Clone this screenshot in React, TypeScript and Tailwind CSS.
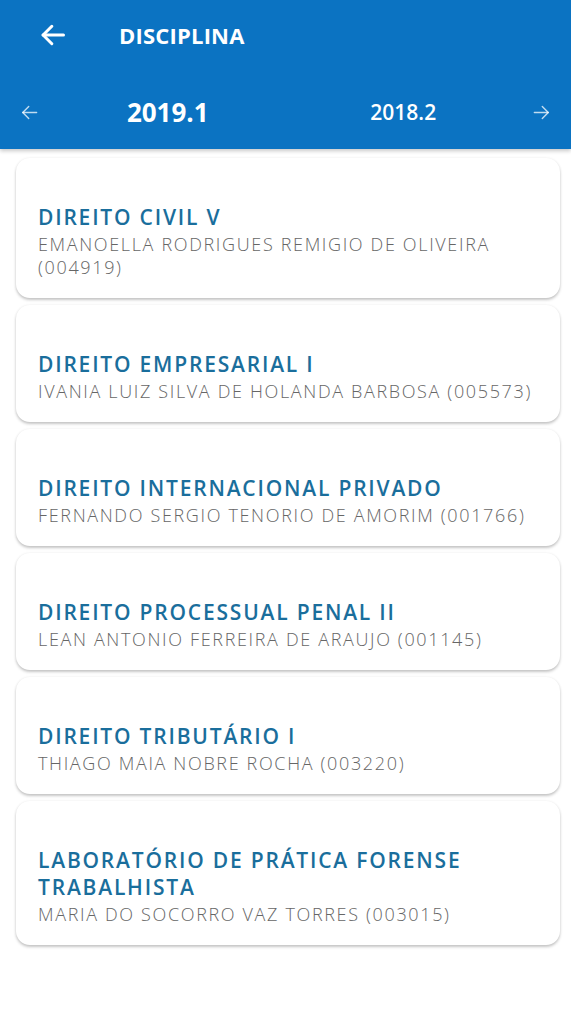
import React from 'react'

type Disciplina = { nome: string; professor: string }

const DISCIPLINAS: Disciplina[] = [
  { nome: 'DIREITO CIVIL V', professor: 'EMANOELLA RODRIGUES REMIGIO DE OLIVEIRA (004919)' },
  { nome: 'DIREITO EMPRESARIAL I', professor: 'IVANIA LUIZ SILVA DE HOLANDA BARBOSA (005573)' },
  { nome: 'DIREITO INTERNACIONAL PRIVADO', professor: 'FERNANDO SERGIO TENORIO DE AMORIM (001766)' },
  { nome: 'DIREITO PROCESSUAL PENAL II', professor: 'LEAN ANTONIO FERREIRA DE ARAUJO (001145)' },
  { nome: 'DIREITO TRIBUTÁRIO I', professor: 'THIAGO MAIA NOBRE ROCHA (003220)' },
  { nome: 'LABORATÓRIO DE PRÁTICA FORENSE TRABALHISTA', professor: 'MARIA DO SOCORRO VAZ TORRES (003015)' },
]

function Arrow({ dir, size, stroke, className }: { dir: 'left' | 'right'; size: number; stroke: number; className?: string }) {
  return (
    <svg width={size} height={size} viewBox="0 0 24 24" fill="none" stroke="currentColor" strokeWidth={stroke} strokeLinecap="round" strokeLinejoin="round" className={className}>
      {dir === 'left' ? (
        <>
          <path d="M21 12H3.5" />
          <path d="M11 4.5 3.5 12l7.5 7.5" />
        </>
      ) : (
        <>
          <path d="M3 12h17.5" />
          <path d="M13 4.5 20.5 12 13 19.5" />
        </>
      )}
    </svg>
  )
}

export default function App() {
  return (
    <div className="min-h-[1024px] bg-white" style={{ fontFamily: '"Open Sans", "Noto Sans", sans-serif' }}>
      {/* barra superior */}
      <header className="bg-[#0b73c2] text-white shadow-[0_2px_4px_rgba(0,0,0,0.22)] h-[149px] flex flex-col">
        <div className="h-[75px] flex items-center pl-[40px] pb-[6px]">
          <Arrow dir="left" size={28} stroke={2.6} className="-ml-[1px]" />
          <h1 className="ml-[52px] text-[22px] font-bold tracking-[0.2px] leading-none">DISCIPLINA</h1>
        </div>
        <div className="h-[74px] flex items-center px-[20px]">
          <div className="w-[30px] flex">
            <Arrow dir="left" size={19} stroke={1.8} className="text-white/75" />
          </div>
          <div className="flex-1 text-center text-[26px] font-bold leading-none">2019.1</div>
          <div className="flex-1 text-center text-[21px] font-semibold leading-none">2018.2</div>
          <div className="w-[30px] flex justify-end">
            <Arrow dir="right" size={19} stroke={1.8} className="text-white/75" />
          </div>
        </div>
      </header>

      {/* lista de disciplinas */}
      <main className="pl-[16px] pr-[11px] pt-[9px] flex flex-col gap-[7px]">
        {DISCIPLINAS.map(d => (
          <div
            key={d.nome}
            className="bg-white rounded-[14px] pt-[46px] pb-[19px] pl-[22px] pr-[18px] shadow-[0_2px_3px_rgba(0,0,0,0.22),0_0_3px_rgba(0,0,0,0.06)]"
          >
            <p className="text-[21px] leading-[27px] font-semibold tracking-[1.8px] text-[#1a6e9c]">{d.nome}</p>
            <p className="mt-[2px] text-[18px] leading-[23px] font-light tracking-[1.65px] text-[#666666]">{d.professor}</p>
          </div>
        ))}
      </main>
    </div>
  )
}
